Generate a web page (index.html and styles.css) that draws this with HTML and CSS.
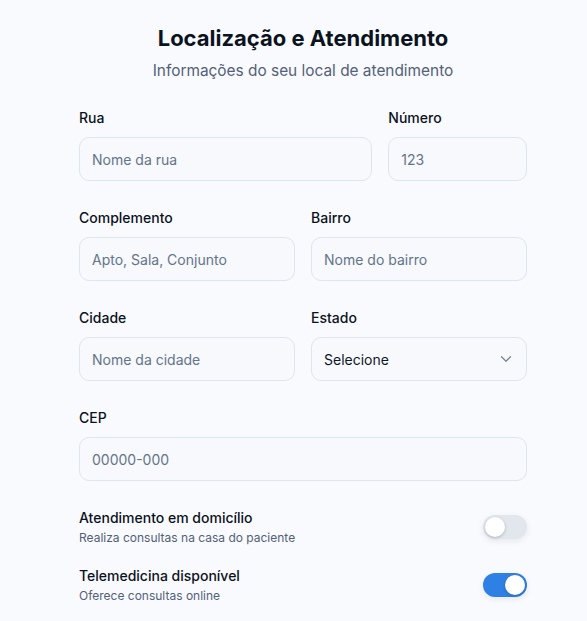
FILE: index.html
```html
<!DOCTYPE html>
<html lang="pt">
<head>
<meta charset="utf-8">
<link rel="stylesheet" href="styles.css">
</head>
<body>
<main class="page">
  <header class="head">
    <h1 class="title">Localização e Atendimento</h1>
    <p class="subtitle">Informações do seu local de atendimento</p>
  </header>
  <form class="form">
    <div class="row three">
      <div class="field span2">
        <label class="label">Rua</label>
        <div class="input"><span class="ph">Nome da rua</span></div>
      </div>
      <div class="field">
        <label class="label">Número</label>
        <div class="input"><span class="ph">123</span></div>
      </div>
    </div>
    <div class="row two">
      <div class="field">
        <label class="label">Complemento</label>
        <div class="input"><span class="ph">Apto, Sala, Conjunto</span></div>
      </div>
      <div class="field">
        <label class="label">Bairro</label>
        <div class="input"><span class="ph">Nome do bairro</span></div>
      </div>
    </div>
    <div class="row two">
      <div class="field">
        <label class="label">Cidade</label>
        <div class="input"><span class="ph">Nome da cidade</span></div>
      </div>
      <div class="field">
        <label class="label">Estado</label>
        <div class="input select"><span class="val">Selecione</span>
          <svg class="chev" width="18" height="18" viewBox="0 0 24 24" fill="none" stroke="#7b889b" stroke-width="1.7" stroke-linecap="round" stroke-linejoin="round"><path d="M6 9l6 6 6-6"/></svg>
        </div>
      </div>
    </div>
    <div class="row one">
      <div class="field">
        <label class="label">CEP</label>
        <div class="input"><span class="ph">00000-000</span></div>
      </div>
    </div>
    <div class="toggles">
      <div class="toggle-row">
        <div class="tt">
          <div class="t-title">Atendimento em domicílio</div>
          <div class="t-sub">Realiza consultas na casa do paciente</div>
        </div>
        <div class="switch"><span class="knob"></span></div>
      </div>
      <div class="toggle-row">
        <div class="tt">
          <div class="t-title">Telemedicina disponível</div>
          <div class="t-sub">Oferece consultas online</div>
        </div>
        <div class="switch on"><span class="knob"></span></div>
      </div>
    </div>
  </form>
</main>
</body>
</html>
```
FILE: styles.css
```css
* { box-sizing: border-box; }
html, body { margin: 0; padding: 0; }
body {
  background: #f9fafe;
  font-family: Inter, "Noto Sans", sans-serif;
  color: #0f172a;
  width: 587px;
  height: 621px;
  overflow: hidden;
}
.page {
  width: 448px;
  margin-left: 79px;
  padding-top: 22px;
}
.head { text-align: center; }
.title {
  margin: 0;
  font-size: 22px;
  line-height: 32px;
  font-weight: 700;
  color: #0b1220;
}
.subtitle {
  margin: 5px 0 0;
  font-size: 15.4px;
  line-height: 24px;
  color: #526179;
}
.form {
  margin-top: 25px;
  display: flex;
  flex-direction: column;
  gap: 27px;
}
.row { display: grid; gap: 16px; }
.three { grid-template-columns: repeat(3, 1fr); }
.span2 { grid-column: span 2; }
.two { grid-template-columns: 1fr 1fr; }
.one { grid-template-columns: 1fr; }
.field { display: flex; flex-direction: column; gap: 9px; }
.label {
  font-size: 14px;
  line-height: 20px;
  font-weight: 500;
  color: #0b1220;
}
.input {
  height: 44px;
  border: 1px solid #dfe5ee;
  border-radius: 10px;
  background: #f7f9fc;
  display: flex;
  align-items: center;
  padding: 0 12px;
  font-size: 14px;
}
.ph { color: #64748b; }
.val { color: #0f172a; }
.select { justify-content: space-between; padding-right: 11px; }
.chev { display: block; }
.toggles {
  display: flex;
  flex-direction: column;
  gap: 20px;
}
.toggle-row {
  display: flex;
  justify-content: space-between;
  align-items: center;
}
.t-title {
  font-size: 14px;
  line-height: 20px;
  font-weight: 500;
  color: #0b1220;
}
.t-sub {
  font-size: 12px;
  line-height: 16px;
  color: #526179;
  margin-top: 2px;
}
.switch {
  width: 44px;
  height: 24px;
  border-radius: 12px;
  background: #e2e7ee;
  position: relative;
  flex: none;
  box-shadow: 0 2px 6px rgba(15, 23, 42, 0.08);
}
.knob {
  position: absolute;
  top: 2px;
  left: 2px;
  width: 20px;
  height: 20px;
  border-radius: 50%;
  background: #fff;
  box-shadow: 0 1px 3px rgba(15, 23, 42, 0.25);
}
.switch.on { background: #2f80e4; }
.switch.on .knob { left: 22px; }
```
